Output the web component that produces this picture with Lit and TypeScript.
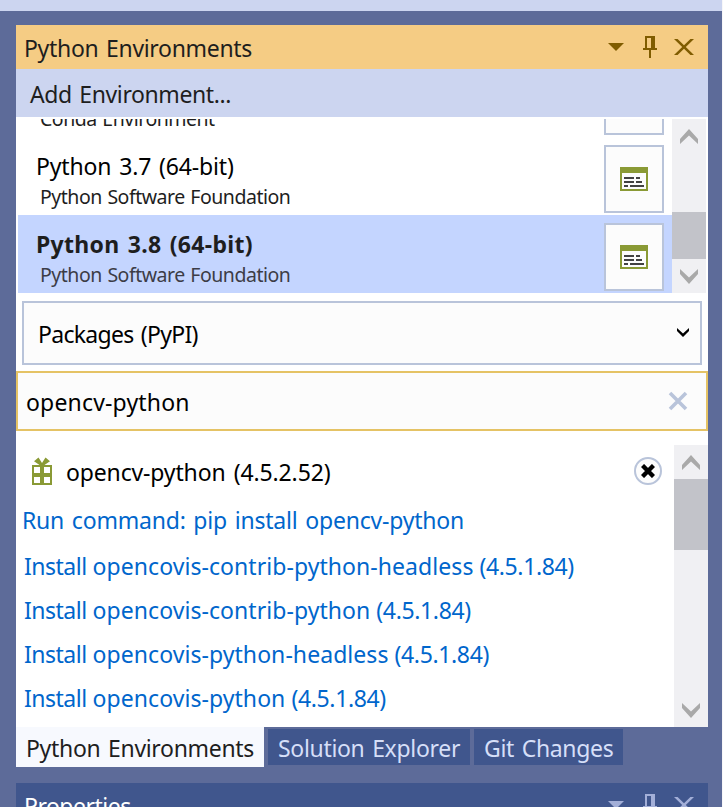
import { LitElement, html, css, svg } from "lit";
import { customElement } from "lit/decorators.js";

const pin = svg`<path fill-rule="evenodd" d="M2 0h10v12h2v2H8v8H6v-8H0v-2h2zM4 2v10h4V2z"/>`;
const cross = svg`<path d="M0 0h3.4L9.5 6.2 15.6 0H19L11.2 8 19 16h-3.4L9.5 9.8 3.4 16H0l7.8-8z"/>`;

@customElement("title-buttons")
class TitleButtons extends LitElement {
  static styles = css`
    :host { display: flex; align-items: flex-start; fill: currentColor; }
    svg { display: block; fill: currentColor; }
    .arrow { margin: 7px 19px 0 0; }
    .pin { margin-right: 17px; }
    .cross { margin-top: 3px; }
  `;
  render() {
    return html`
      <svg class="arrow" width="16" height="8" viewBox="0 0 16 8"><path d="M0 0h16L8 8z"/></svg>
      <svg class="pin" width="14" height="22" viewBox="0 0 14 22">${pin}</svg>
      <svg class="cross" width="20" height="16" viewBox="0 0 19 16" preserveAspectRatio="none">${cross}</svg>`;
  }
}

@customElement("scroll-bar")
class ScrollBar extends LitElement {
  static styles = css`
    :host { display: flex; flex-direction: column; background: #f0f0f3; width: 34px; }
    svg { display: block; margin: 0 auto; fill: #a9a9a9; flex: none; }
    .up { margin-top: 10px; }
    .down { margin-bottom: 9px; transform: scaleY(-1); }
    .track { flex: 1; display: flex; flex-direction: column; padding: 9px 0 10px; }
    .thumb { background: #c2c3c9; }
    :host([kind="list"]) .track { justify-content: flex-end; }
    :host([kind="list"]) .thumb { height: 47px; }
    :host([kind="results"]) .thumb { height: 71px; }
  `;
  render() {
    const chevron = svg`<path d="M0 10 9 0l9 10v5L9 6.500 0 15z"/>`;
    return html`
      <svg class="up" width="18" height="15" viewBox="0 0 18 15">${chevron}</svg>
      <div class="track"><div class="thumb"></div></div>
      <svg class="down" width="18" height="15" viewBox="0 0 18 15">${chevron}</svg>`;
  }
}

@customElement("app-root")
class AppRoot extends LitElement {
  static styles = css`
    * { box-sizing: border-box; }
    :host {
      display: block; width: 722px; height: 807px; overflow: hidden;
      background: #5d6b99; border-right: 1px solid #f7f7f9;
      font: 23px/32px "Noto Sans", "Open Sans", sans-serif;
      color: #1e1e1e; white-space: nowrap;
    }
    .strip { height: 11px; background: #ccd5f0; margin-bottom: 14px; }
    .panel { width: 692px; margin-left: 16px; }
    .title { height: 44px; background: #f5cc84; display: flex; justify-content: space-between; padding: 7px 14px 0 8px; letter-spacing: -0.32px; word-spacing: 2px; }
    .title title-buttons { color: #805c00; margin-top: 4px; }
    .add { height: 48px; background: #ccd5f0; padding: 9px 0 0 14px; letter-spacing: -0.4px; word-spacing: 2px; }
    .body { background: #fff; height: 610px; }
    .envs { display: flex; padding: 2px 2px 0; height: 176px; }
    .rows { width: 654px; height: 174px; overflow: hidden; display: flex; flex-direction: column; justify-content: flex-end; }
    .env { height: 78px; flex: none; display: flex; justify-content: space-between; padding: 8px 8px 0 18px; color: #000; }
    .env.selected { background: #c4d5ff; color: #1e1e1e; }
    .name { height: 32px; margin-top: 5px; letter-spacing: -0.15px; word-spacing: 2px; }
    .selected .name { font-weight: 700; letter-spacing: 0.3px; word-spacing: 2px; }
    .vendor { font-size: 19.500px; line-height: 26px; padding: 2px 0 0 4px; color: #1e1e1e; letter-spacing: -0.48px; word-spacing: 1px; }
    .selected .vendor { color: #3c3c46; }
    .open { width: 60px; height: 68px; border: 2px solid #b9c4da; background: #fcfcfc; padding: 20px 0 0 14px; }
    .open svg, .gift, .clear, .chev, .uninstall svg { display: block; }
    .combo { margin: 8px 6px 0; height: 64px; border: 2px solid #b9c4da; background: #fcfcfc; color: #000; display: flex; justify-content: space-between; padding: 15px 11px 0 14px; letter-spacing: -0.7px; word-spacing: 2px; }
    .chev { margin-top: 10px; }
    .search { margin-top: 6px; height: 60px; border: 2px solid #e5c365; background: #fcfcfc; color: #000; display: flex; justify-content: space-between; padding: 13px 18px 0 8px; letter-spacing: 0.17px; }
    .clear { margin-top: 5px; }
    .results { display: flex; justify-content: space-between; margin-top: 14px; height: 282px; }
    .items { width: 646px; color: #0066cc; }
    .pkg { display: flex; color: #000; height: 60px; padding: 11px 0 0 15px; letter-spacing: -0.15px; word-spacing: 2.500px; }
    .gift { margin: 1px 13px 0 0; }
    .uninstall { width: 28px; height: 28px; border: 2px solid #b9c4da; border-radius: 50%; background: #fcfcfc; margin: 1px 0 0 auto; padding: 5px; }
    .cmd { height: 46px; padding-left: 6px; margin-top: -1px; letter-spacing: -0.21px; word-spacing: 2px; }
    .pkgs { padding-left: 8px; }
    .link { height: 44px; }
    .verb { letter-spacing: -0.5px; }
    .pkg-name { letter-spacing: 0.06px; }
    .version { letter-spacing: -0.36px; }
    .tabs { display: flex; gap: 4px; height: 56px; align-items: flex-start; letter-spacing: -0.32px; word-spacing: 2px; }
    .tab { margin-top: 2px; height: 36px; background: #40568d; color: #d6dff8; padding: 3px 10px 0; }
    .tab.active { margin-top: 0; height: 40px; padding-top: 5px; background: #f7f9fe; color: #1e1e1e; width: 248px; }
    .explorer { width: 202px; } .git { width: 149px; }
    .props { background: #40568d; color: #fff; letter-spacing: -0.5px; }
    .props title-buttons { color: #a3afd8; }
  `;

  private envRow(name: string, vendor: string, selected = false) {
    return html`<div class="env ${selected ? "selected" : ""}">
      <div><div class="name"><span>${name}</span></div><div class="vendor"><span>${vendor}</span></div></div>
      <div class="open">
        <svg width="28" height="24" viewBox="0 0 28 24" shape-rendering="crispEdges">
          <path fill="#8a9a35" d="M0 0h28v24H0z"/><path fill="#fcfcfc" d="M2 6h24v16H2z"/>
          <path fill="#424242" d="M4 10h10v2H4zM16 10h4v2h-4zM4 14h10v2H4zM16 14h6v2h-6zM4 18h4v2H4zM10 18h14v2H10z"/>
        </svg>
      </div>
    </div>`;
  }

  render() {
    const links = [
      "opencovis-contrib-python-headless",
      "opencovis-contrib-python",
      "opencovis-python-headless",
      "opencovis-python",
    ];
    return html`
      <div class="strip"></div>
      <div class="panel">
        <div class="title"><span>Python Environments</span><title-buttons></title-buttons></div>
        <div class="add"><span>Add Environment...</span></div>
        <div class="body">
          <div class="envs">
            <div class="rows">
              ${this.envRow("", "Conda Environment")}
              ${this.envRow("Python 3.7 (64-bit)", "Python Software Foundation")}
              ${this.envRow("Python 3.8 (64-bit)", "Python Software Foundation", true)}
            </div>
            <scroll-bar kind="list"></scroll-bar>
          </div>
          <div class="combo"><span>Packages (PyPI)</span>
            <svg class="chev" width="12" height="9" viewBox="0 0 12 9"><path d="M0 0 6 5.500 12 0v3L6 9 0 3z"/></svg>
          </div>
          <div class="search"><span>opencv-python</span>
            <svg class="clear" width="20" height="20" viewBox="0 0 20 20"><path stroke="#b9c4da" stroke-width="3.600" d="M2 2l16 16M18 2 2 18"/></svg>
          </div>
          <div class="results">
            <div class="items">
              <div class="pkg">
                <svg class="gift" width="22" height="28" viewBox="0 0 22 28">
                  <path fill="#8a9a35" fill-rule="evenodd" d="M1 8h20v20H1zM3 10v6h6v-6zM13 10v6h6v-6zM3 20v6h6v-6zM13 20v6h6v-6z"/>
                  <path fill="#8a9a35" d="M7.500 .5 11 6 14.500 .5 19 4.300 13.500 8h-5L3 4.300z"/>
                </svg>
                <span>opencv-python (4.5.2.52)</span>
                <div class="uninstall"><svg width="14" height="14" viewBox="0 0 14 14"><path stroke="#000" stroke-width="4.400" d="M1.500 1.500l11 11M12.500 1.500l-11 11"/></svg></div>
              </div>
              <div class="cmd"><span>Run command: pip install opencv-python</span></div>
              <div class="pkgs">${links.map((l) => html`<div class="link"><span class="verb">Install</span> <span class="pkg-name">${l}</span> <span class="version">(4.5.1.84)</span></div>`)}</div>
            </div>
            <scroll-bar kind="results"></scroll-bar>
          </div>
        </div>
        <div class="tabs">
          <div class="tab active"><span>Python Environments</span></div>
          <div class="tab explorer"><span>Solution Explorer</span></div>
          <div class="tab git"><span>Git Changes</span></div>
        </div>
        <div class="title props"><span>Properties</span><title-buttons></title-buttons></div>
      </div>`;
  }
}
